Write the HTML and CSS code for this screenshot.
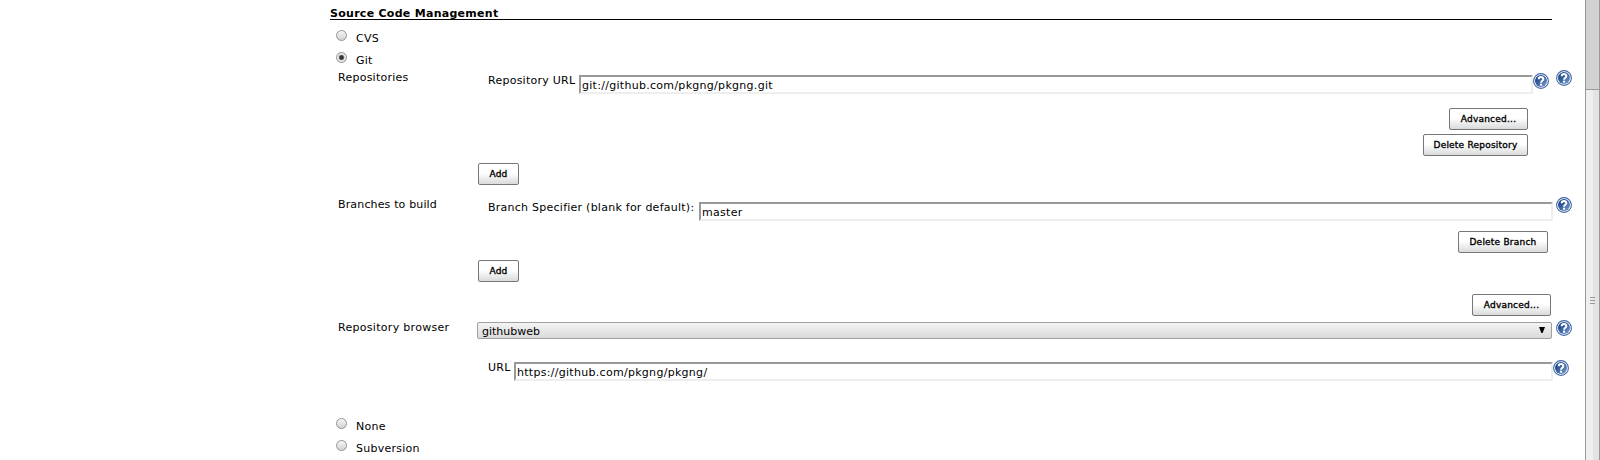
FILE: index.html
```
<!DOCTYPE html>
<html lang="en">
<head>
<meta charset="utf-8">
<title>Source Code Management</title>
<link rel="stylesheet" href="styles.css">
</head>
<body>
<svg width="0" height="0" class="defs" aria-hidden="true">
  <defs>
    <linearGradient id="blue" x1="0" y1="0" x2="1" y2="1">
      <stop offset="0.25" stop-color="#224a8c"/>
      <stop offset="1" stop-color="#7ba0d0"/>
    </linearGradient>
    <symbol id="help" viewBox="0 0 16 16">
      <circle cx="8" cy="8" r="7.4" fill="#fff" stroke="#4168a4" stroke-width="1.1"/>
      <circle cx="8" cy="8" r="6" fill="url(#blue)"/>
      <path d="M5.7 6.3C5.7 3.3 10.4 3.4 10.3 6.2C10.2 7.9 8.1 7.8 8.1 9.8" fill="none" stroke="#fff" stroke-width="2"/>
      <rect x="7" y="10.7" width="2.1" height="2" fill="#fff"/>
    </symbol>
  </defs>
</svg>
<div class="page">
  <main class="form">
    <h1 class="heading"><span class="heading-text">Source Code Management</span></h1>
    <label class="option"><span class="radio"></span><span class="option-text">CVS</span></label>
    <label class="option"><span class="radio checked"></span><span class="option-text">Git</span></label>

    <div class="row row-repo">
      <span class="label">Repositories</span>
      <div class="nested">
        <span class="sub">Repository URL</span>
        <div class="input repo-input">git://github.com/pkgng/pkgng.git</div>
        <svg class="help inner"><use href="#help"/></svg>
      </div>
      <svg class="help"><use href="#help"/></svg>
    </div>
    <div class="actions act-repo">
      <button class="btn advanced">Advanced...</button>
      <button class="btn delete-repo">Delete Repository</button>
    </div>
    <div class="add-line add-repo"><button class="btn add">Add</button></div>

    <div class="row row-branch">
      <span class="label">Branches to build</span>
      <div class="nested">
        <span class="sub">Branch Specifier (blank for default):</span>
        <div class="input branch-input">master</div>
      </div>
      <svg class="help"><use href="#help"/></svg>
    </div>
    <div class="actions act-branch"><button class="btn delete-branch">Delete Branch</button></div>
    <div class="add-line add-branch"><button class="btn add">Add</button></div>
    <div class="actions act-git"><button class="btn advanced">Advanced...</button></div>

    <div class="row row-browser">
      <span class="label">Repository browser</span>
      <div class="select"><span>githubweb</span><svg class="arrow" viewBox="0 0 6 6"><path d="M0 0H6L3.6 6H2.4Z"/></svg></div>
      <svg class="help"><use href="#help"/></svg>
    </div>
    <div class="row row-url">
      <span class="label"></span>
      <div class="nested">
        <span class="sub">URL</span>
        <div class="input url-input">https://github.com/pkgng/pkgng/</div>
      </div>
      <svg class="help"><use href="#help"/></svg>
    </div>

    <label class="option"><span class="radio"></span><span class="option-text">None</span></label>
    <label class="option"><span class="radio"></span><span class="option-text">Subversion</span></label>
  </main>
  <div class="scrollbar">
    <div class="thumb"></div>
    <div class="grip"><i></i><i></i><i></i></div>
  </div>
</div>
</body>
</html>
```
FILE: styles.css
```
* { box-sizing: border-box; }
body {
  margin: 0;
  background: #fff;
  color: #000;
  font: 11px/14px "DejaVu Sans", Verdana, sans-serif;
  letter-spacing: 0.25px;
  white-space: nowrap;
}
.defs { display: block; }
.page { display: flex; height: 460px; overflow: hidden; }
.form { width: 1585px; padding-left: 330px; }

.heading {
  width: 1222px;
  height: 20px;
  margin: 0 0 7px;
  padding-top: 7px;
  border-bottom: 1px solid #000;
  font-size: 11px;
  font-weight: bold;
  letter-spacing: 0.28px;
}
.heading-text { display: block; }

.option { display: flex; height: 22px; padding-left: 6px; }
.radio {
  width: 11px;
  height: 11px;
  margin: 3px 9px 0 0;
  border: 1px solid #929292;
  border-radius: 50%;
  background: linear-gradient(#f6f6f6, #d2d2d2);
}
.checked { background: radial-gradient(circle, #333 0 1.4px, #666 2.2px, #e8e8e8 3.2px); }
.option-text { padding-top: 5px; }

.row { display: flex; padding-left: 8px; }
.label { width: 139px; }
.nested { display: flex; width: 1076px; padding-left: 11px; }
.sub { padding-top: 3px; }
.input {
  height: 19px;
  margin-left: auto;
  padding: 2px 1px 0;
  border: 2px solid;
  border-color: #999 #eee #eee #999;
  letter-spacing: 0.29px;
}
.help { width: 16px; height: 16px; margin-left: 3px; flex: none; }

.row-repo { height: 37px; }
.row-repo .nested { width: 1072px; }
.row-repo > .help { margin: -1px 0 0 7px; }
.row-repo .inner { margin: 2px 0 0; }
.repo-input { width: 954px; margin-top: 4px; }

.actions { display: flex; flex-direction: column; align-items: flex-end; gap: 4px; }
.act-repo { height: 55px; padding-right: 57px; }
.act-branch { height: 29px; padding-right: 37px; }
.act-git { height: 27px; padding-right: 34px; }
.add-line { padding-left: 148px; }
.add-repo { height: 34px; }
.add-branch { height: 34px; }

.btn {
  display: block;
  height: 22px;
  margin: 0;
  padding: 0;
  border: 1px solid #777;
  border-radius: 2px;
  background: linear-gradient(#fff 45%, #d9dadb);
  color: #000;
  font: 9px/18px "DejaVu Sans", Verdana, sans-serif;
  letter-spacing: 0.22px;
  -webkit-text-stroke: 0.35px #000;
}
.add { width: 41px; }
.advanced { width: 79px; }
.delete-repo { width: 105px; }
.delete-branch { width: 90px; }

.row-branch { height: 34px; }
.row-branch .label { padding-top: 1px; letter-spacing: 0.15px; }
.row-branch .sub { padding-top: 4px; }
.branch-input { width: 854px; margin-top: 5px; }

.row-browser { height: 39px; }
.row-browser .label { letter-spacing: 0.3px; }
.row-browser .help { margin-top: -1px; }
.select {
  display: flex;
  justify-content: space-between;
  width: 1075px;
  height: 17px;
  margin: 1px 1px 0 0;
  padding: 2px 6px 0 4px;
  border: 1px solid #a0a0a0;
  border-radius: 2px;
  background: linear-gradient(#f4f4f4, #dadada);
  letter-spacing: 0;
}
.arrow { width: 6px; height: 6px; margin-top: 2px; }

.row-url { height: 55px; }
.row-url .help { margin-left: 0; }
.row-url .sub { padding-top: 1px; }
.url-input { width: 1039px; margin-top: 2px; }

.scrollbar {
  width: 15px;
  border: solid #999;
  border-width: 0 1px;
  background: linear-gradient(90deg, #efefef 7px, #e3e3e3 7px);
}
.thumb { height: 90px; border-bottom: 1px solid #999; background: #d2d2d2; }
.grip { display: grid; gap: 2px; width: 5px; margin: 207px 0 0 4px; }
.grip i { height: 1px; background: #999; }
```
